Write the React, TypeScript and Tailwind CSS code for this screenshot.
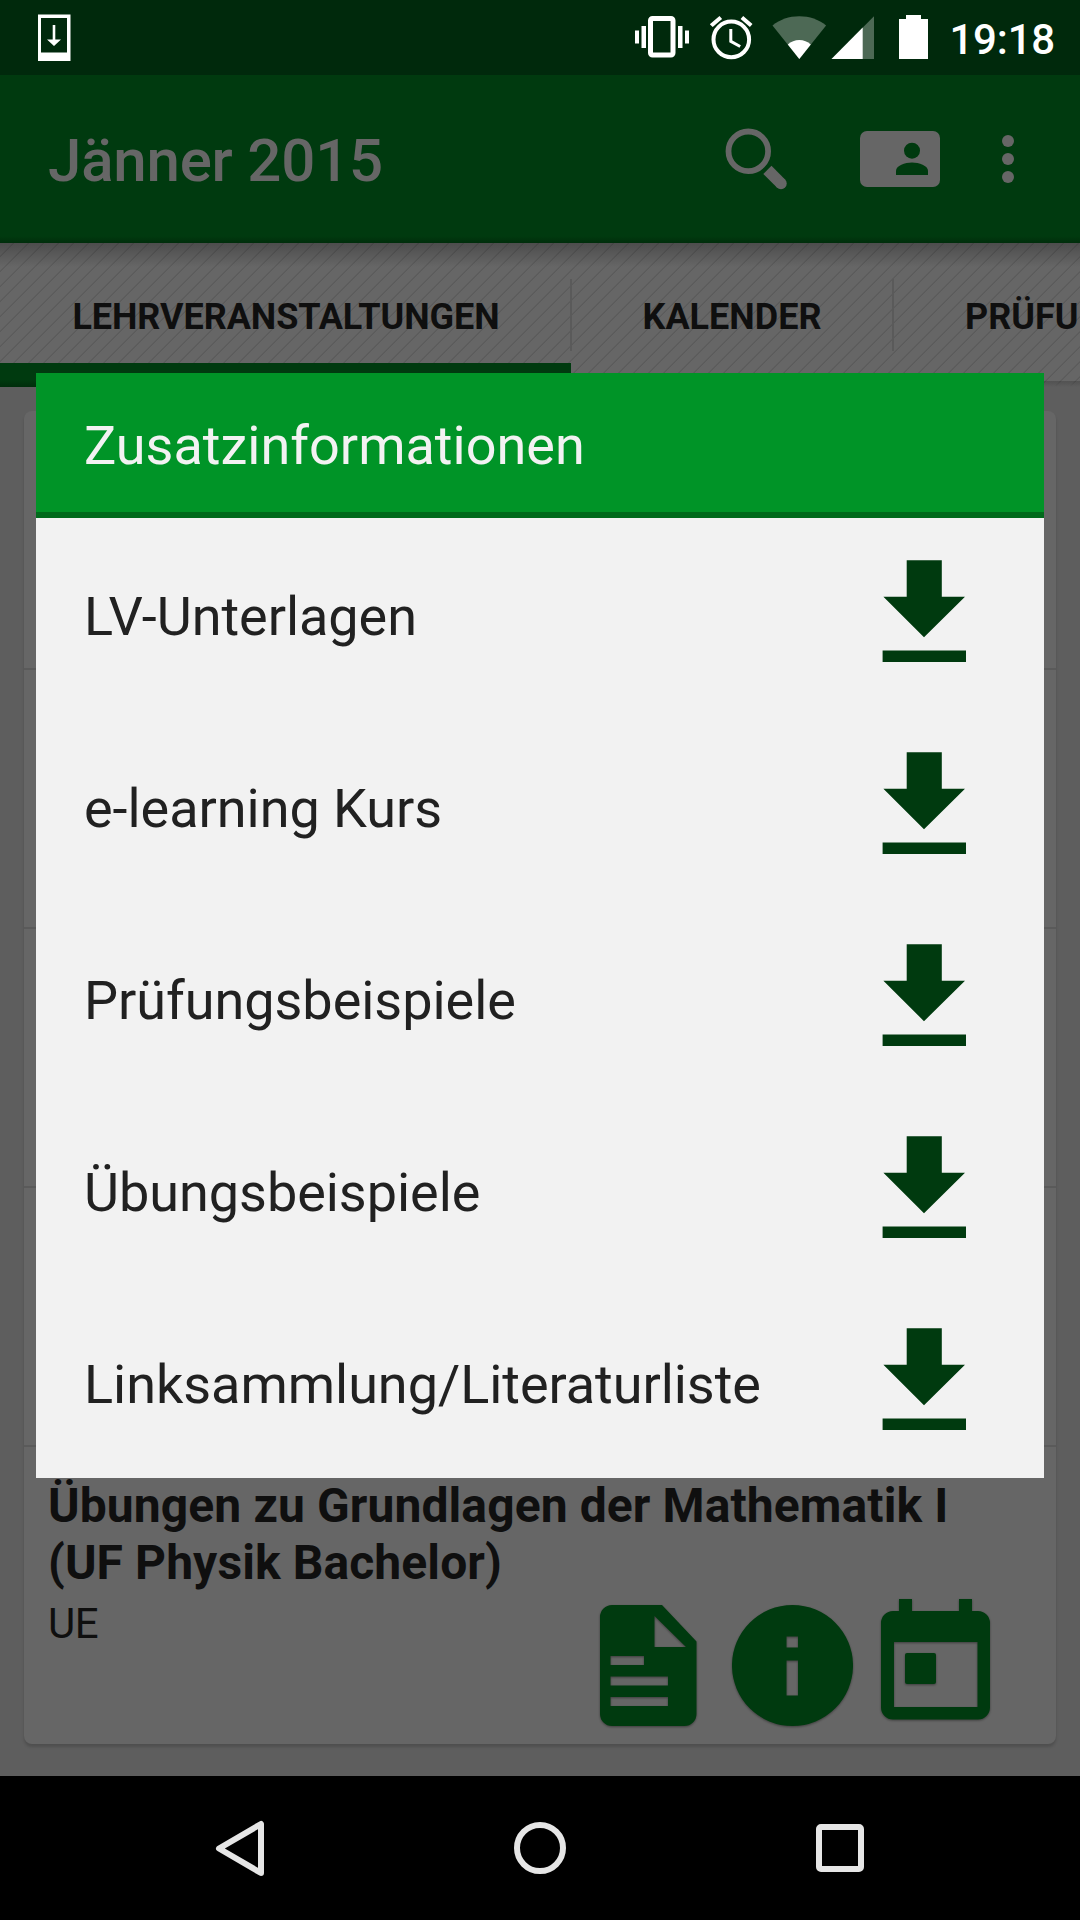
const DOWNLOADS = [
  'LV-Unterlagen',
  'e-learning Kurs',
  'Prüfungsbeispiele',
  'Übungsbeispiele',
  'Linksammlung/Literaturliste',
];

const StatusBar = () => (
  <div className="flex h-[75px] shrink-0 items-start bg-[#00290c] text-white">
    {/* System update */}
    <svg className="mt-[14px] ml-[38px] h-12 w-[33px]" viewBox="0 0 33 48" fill="currentColor">
      <path fillRule="evenodd" d="M0 .5h32.5V47H0zM3 4v34.5h26V4z" />
      <path d="M14.7 11h2.6v14.5H23L16 32l-7-6.5h5.7z" />
    </svg>

    <div className="ml-auto flex pr-[25px]">
      {/* Vibrate */}
      <svg className="mt-[15px] h-[45px] w-[54px]" viewBox="0 0 54 45" fill="currentColor">
        <rect x="15.5" y="3.5" width="22.5" height="36.5" rx="2" fill="none" stroke="currentColor" strokeWidth="5" />
        <path d="M0 15.5h4v13H0zM6.5 11h4.5v22H6.5zM43 11h4.5v22H43zM50 15.5h4v13h-4z" />
      </svg>

      {/* Alarm */}
      <svg className="mt-[15px] ml-[20px] h-[45px] w-[45px]" viewBox="709 15 45 45" fill="none" stroke="currentColor">
        <circle cx="731.3" cy="39.4" r="17.8" strokeWidth="4" />
        <path d="M730.8 29v12.3l9.4 5.2" strokeWidth="3" />
        <path
          d="M709.8 24.2l9.7-8.2 2.6 3-9.4 7.9zM743.2 16l9.3 8.1-2.6 2.8-9.3-8z"
          fill="currentColor"
          stroke="none"
        />
      </svg>

      {/* Wifi */}
      <svg className="mt-[15px] ml-[18px] h-[45px] w-[55px]" viewBox="772 15 55 45" fill="currentColor">
        <path d="M799.3 59l-26.8-33.5c7.5-6 16.5-9.2 26.8-9.2s19.3 3.2 26.8 9.2z" opacity="0.3" />
        <path d="M799.3 59l-11.5-14.5c3.2-3 7.1-4.5 11.5-4.5s8.3 1.5 11.5 4.5z" />
      </svg>

      {/* Signal */}
      <svg className="mt-[15px] ml-[4px] h-[45px] w-[44px]" viewBox="831 15 44 45" fill="currentColor">
        <path d="M831.5 59L874 16.3V59z" opacity="0.3" />
        <path d="M831.5 59l31.2-31.5V59z" />
      </svg>

      {/* Battery */}
      <svg className="mt-[15px] ml-[24px] h-[45px] w-[29px]" viewBox="0 0 29 45" fill="currentColor">
        <path d="M0 4h7V0h15v4h7v40H0z" />
      </svg>

      <span className="ml-[21px] text-[42px] leading-[79px] font-medium tracking-[-0.2px]">19:18</span>
    </div>
  </div>
);

const AppBar = () => (
  <div className="flex h-[168px] shrink-0 items-center bg-linear-to-b from-[#003a0f] from-96% to-[#002d0b] pl-12 text-[#666]">
    <h1 className="pt-[4px] text-[60px] leading-none font-medium tracking-[-0.2px]">Jänner 2015</h1>

    <div className="ml-auto flex items-center">
      <svg className="h-[62px] w-[62px]" viewBox="725 128 62 62" fill="none" stroke="currentColor">
        <circle cx="748.3" cy="151.3" r="19.8" strokeWidth="5.8" />
        <path d="M767.4 169.9l13.6 13.6" strokeWidth="11.5" />
        <circle cx="781" cy="183.5" r="5.75" fill="currentColor" stroke="none" />
      </svg>

      <svg className="ml-[73px] h-14 w-20" viewBox="0 0 80 56">
        <rect width="80" height="56" rx="7" fill="currentColor" />
        <circle cx="52" cy="19.7" r="8" fill="#003a0f" />
        <path d="M36 44v-4c0-5.5 9-8.5 16-8.5s16 3 16 8.5v4z" fill="#003a0f" />
      </svg>

      <svg className="mr-[66px] ml-[62px] h-12 w-3" viewBox="0 0 12 48" fill="currentColor">
        <circle cx="6" cy="6" r="6" />
        <circle cx="6" cy="24" r="6" />
        <circle cx="6" cy="42" r="6" />
      </svg>
    </div>
  </div>
);

const Tabs = () => (
  <div className="relative flex h-36 shrink-0 overflow-hidden bg-[#666] bg-[repeating-linear-gradient(135deg,#666_0px,#666_8.6px,#585858_9.7px,#666_10.607px)] text-4xl font-bold text-[#0f0f0f]">
    <div className="flex w-[570px] shrink-0 flex-col justify-end">
      <span className="pb-[12px] pl-[2px] text-center leading-[68px] tracking-[-0.05px]">LEHRVERANSTALTUNGEN</span>
      <div className="-mr-px h-6 bg-linear-to-b from-[#003a0f] from-70% to-[#002d0b]" />
    </div>
    <div className="flex w-[322px] shrink-0 items-center justify-between">
      <div className="h-[72px] w-[2px] bg-[#5a5a5a]" />
      <span className="pt-[3px] pl-[2px]">KALENDER</span>
      <div className="w-[2px]" />
    </div>
    <div className="flex shrink-0 items-center">
      <div className="h-[72px] w-[2px] bg-[#5a5a5a]" />
      <span className="pt-[3px] pl-[71px]">PRÜFU</span>
    </div>

    {/* Shadow cast by the app bar, and the strip's own one */}
    <div className="absolute inset-x-0 top-0 h-6 bg-linear-to-b from-black/25 to-transparent" />
    <div className="absolute right-0 bottom-0 left-[571px] h-[6px] bg-linear-to-b from-black/15 to-[#5e5e5e]" />
  </div>
);

const CourseList = () => (
  <div className="flex grow flex-col bg-[#5e5e5e] px-6 pt-6 pb-8">
    <div className="flex grow flex-col rounded-lg bg-[#666] shadow-[0_3px_3px_rgba(0,0,0,0.16)]">
      <div className="h-[259px] border-b-2 border-[#5a5a5a]" />
      <div className="h-[259px] border-b-2 border-[#5a5a5a]" />
      <div className="h-[259px] border-b-2 border-[#5a5a5a]" />
      <div className="h-[259px] border-b-2 border-[#5a5a5a]" />

      <div className="flex grow flex-col px-6 pt-[30px] text-[#0f0f0f]">
        <h2 className="text-5xl leading-[57px] font-bold tracking-[0.1px]">
          Übungen zu Grundlagen der Mathematik I
          <br />
          (UF Physik Bachelor)
        </h2>
        <div className="flex justify-between">
          <p className="pt-[6px] text-[42px] leading-[54px] tracking-[-0.4px]">UE</p>

          <div className="mr-[42px] flex items-start pt-[8px] text-[#003a0f]">
            <svg className="mt-[6px] h-[121px] w-[97px] drop-shadow-[0_1px_1px_rgba(0,0,0,0.4)]" viewBox="0 0 97 121" fill="currentColor">
              <path
                fillRule="evenodd"
                d="M12 0h50l34.5 36.5V109a12 12 0 0 1-12 12H12a12 12 0 0 1-12-12V12A12 12 0 0 1 12 0zM54.5 11v31H86zM10.5 51v9H44v-9zM10.5 71.5v9H68v-9zM10.5 92v9H68v-9z"
              />
            </svg>
            <svg className="mt-[6px] ml-[35px] h-[121px] w-[121px] drop-shadow-[0_1px_1px_rgba(0,0,0,0.4)]" viewBox="0 0 121 121" fill="currentColor">
              <path
                fillRule="evenodd"
                d="M60.5 0a60.5 60.5 0 1 0 0 121a60.5 60.5 0 1 0 0-121zM54.5 31.5H66v11H54.5zM54.5 55.5H66v35H54.5z"
              />
            </svg>
            <svg className="ml-[28px] h-[121px] w-[109px] drop-shadow-[0_1px_1px_rgba(0,0,0,0.4)]" viewBox="0 0 109 121" fill="currentColor">
              <path
                fillRule="evenodd"
                d="M18 0h13v12h47V0h13v12h6a12 12 0 0 1 12 12v84.5a12 12 0 0 1-12 12H12a12 12 0 0 1-12-12V24a12 12 0 0 1 12-12h6zM13 43v65h83.5V43z"
              />
              <rect x="24" y="54" width="31" height="31" rx="2" />
            </svg>
          </div>
        </div>
      </div>
    </div>
  </div>
);

const DownloadIcon = () => (
  <svg className="h-[102px] w-[84px] text-[#003a0f]" viewBox="0 0 84 102" fill="currentColor">
    <path d="M24.7.3h35.1v36.4H83L42 77.2 1.4 36.7h23.3zM.6 90.5H84V102H.6z" />
  </svg>
);

const InfoDialog = () => (
  <div className="absolute inset-x-9 top-[373px] flex flex-col bg-[#f2f2f2]">
    <div className="flex h-[145px] items-center border-b-[6px] border-[#006a1b] bg-[#009427] pt-[7px] pl-12 text-[54px] leading-none text-[#f2f2f2]">
      Zusatzinformationen
    </div>
    {DOWNLOADS.map((label) => (
      <div key={label} className="flex h-48 items-center justify-between pr-[78px] pl-12">
        <span className="pt-[5px] text-[54px] leading-none tracking-[-0.04px] text-[#212121]">{label}</span>
        <div className="pb-[6px]">
          <DownloadIcon />
        </div>
      </div>
    ))}
  </div>
);

const NavigationBar = () => (
  <div className="flex h-36 shrink-0 items-center bg-black pr-[216px] pl-[215px] text-[#e6e6e6]">
    <svg className="h-[57px] w-[50px]" viewBox="0 0 50 57" fill="none" stroke="currentColor" strokeWidth="6" strokeLinejoin="round">
      <path d="M46 4v49L4 28.5z" />
    </svg>
    <svg className="ml-[249px] h-[52px] w-[52px]" viewBox="0 0 52 52" fill="none" stroke="currentColor" strokeWidth="6">
      <circle cx="26" cy="26" r="23" />
    </svg>
    <div className="ml-auto h-12 w-12 rounded-[5px] border-[6px] border-[#e6e6e6]" />
  </div>
);

export default function App() {
  return (
    <div className="relative flex h-[1920px] w-[1080px] flex-col overflow-hidden font-['Roboto',sans-serif]">
      <StatusBar />
      <AppBar />
      <Tabs />
      <CourseList />
      <NavigationBar />
      <InfoDialog />
    </div>
  );
}
